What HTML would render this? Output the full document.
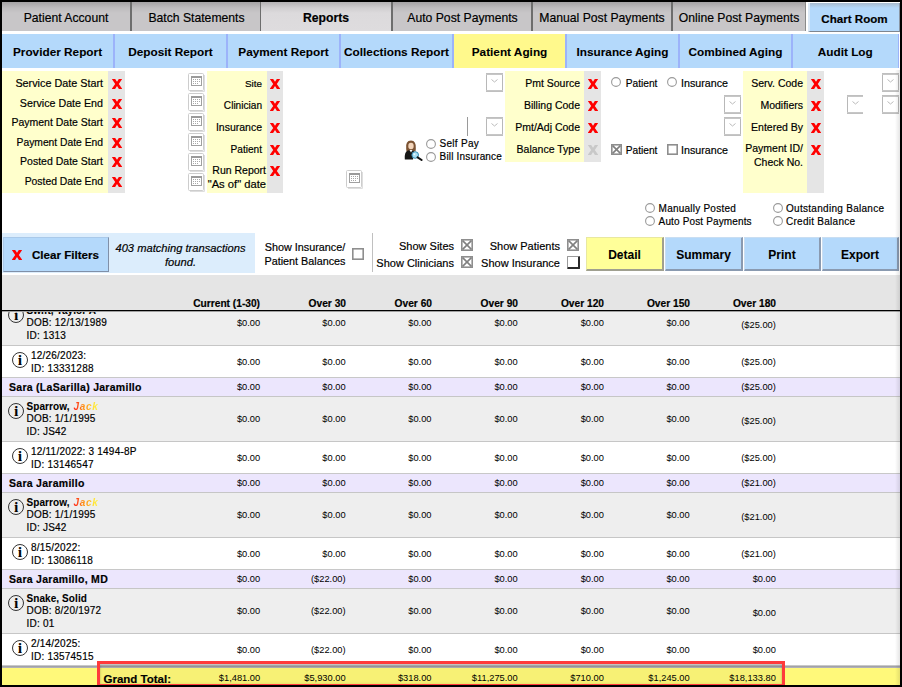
<!DOCTYPE html>
<html><head><meta charset="utf-8">
<style>
*{box-sizing:border-box;margin:0;padding:0}
html,body{width:902px;height:687px;overflow:hidden;background:#000}
body{position:relative;font-family:"Liberation Sans",sans-serif;color:#000;-webkit-text-stroke:0.18px #000}
.a{position:absolute}
#page{position:absolute;left:2px;top:2px;width:898px;height:683px;background:#fff;overflow:hidden}
/* top tabs */
.tt{position:absolute;top:0;height:29px;background:linear-gradient(#a4a2a4 0px,#bebcbe 6px,#c8c6c8 11px,#c8c6c8 100%);font-size:12.2px;line-height:33px;text-align:center;white-space:nowrap}
.tdiv{position:absolute;top:0;width:2px;height:29px;background:#6d6d6d}
/* sub tabs */
.st{position:absolute;-webkit-text-stroke:0.08px #000;top:32px;height:34px;background:#b4d9fb;font-size:11.8px;font-weight:bold;line-height:36px;text-align:center;white-space:nowrap}
.sdiv{position:absolute;top:32px;width:2px;height:34px;background:#9cb3fa}
.yl{position:absolute;background:#ffffcc}
.gx{position:absolute;background:#e5e5e5}
.lbl{position:absolute;font-size:10.5px;text-align:right;white-space:nowrap;line-height:13px}
.xx{position:absolute;width:10px;height:10px}
.x{position:absolute;font-size:14px;font-weight:bold;color:#f00;line-height:14px;width:17px;text-align:center}
.cal{position:absolute;width:16px;height:18px;border:1px solid #c8c8c8;border-radius:2px;background:#fff;box-shadow:1px 1px 0 #dcdcdc}
.cal:after{content:"";position:absolute;left:2px;top:2px;width:10px;height:10px;border:1px solid #9a9a9a;border-top:2px solid #8a8a8a;background:repeating-linear-gradient(90deg,#fff 0 1px,#bbb 1px 2px)}
.dd{position:absolute;width:17px;height:18px;border:1px solid #c8c8c8;background:#fff}
.dd:after{content:"";position:absolute;left:5px;top:3px;width:5px;height:5px;border-right:1px solid #b0b0b0;border-bottom:1px solid #b0b0b0;transform:rotate(45deg)}
.rad{position:absolute;width:11px;height:11px;border:1px solid #6a6a6a;border-radius:50%;background:#fff}
.chk{position:absolute;width:12px;height:12px;border:1px solid #777;background:#fff}
.chkx{position:absolute;width:12px;height:12px;border:1px solid #777;background:#fff}
.chkx:before,.chkx:after{content:"";position:absolute;left:-1px;top:4.5px;width:12px;height:1px;background:#666;transform:rotate(45deg)}
.chkx:after{transform:rotate(-45deg)}
.t11{position:absolute;font-size:11px;white-space:nowrap;line-height:13px}
.btn{position:absolute;-webkit-text-stroke:0.08px #000;top:235px;height:34px;background:#b4d9fb;border:1px solid #c9def2;border-right:2px solid #8a9ab0;border-bottom:2px solid #8a9ab0;font-size:12px;font-weight:bold;text-align:center;line-height:35px}
/* table */
.row{position:absolute;left:0;width:898px;border-bottom:1px solid #c8c8c8}
.rg{background:#eeeeee}
.rw{background:#ffffff}
.rl{background:#ece6fd;font-weight:bold;font-size:12px}
.num{position:absolute;-webkit-text-stroke:0;font-weight:normal;font-size:9.3px;text-align:right;width:60px;white-space:nowrap;line-height:12px}
.hdr{position:absolute;font-size:10.2px;font-weight:bold;text-align:right;width:80px;white-space:nowrap;line-height:12px}
.info{position:absolute;width:16px;height:16px;border:1px solid #333;border-radius:50%;font-family:"Liberation Serif",serif;font-weight:bold;font-size:14px;line-height:15px;text-align:center}
.pl{position:absolute;font-size:10px;letter-spacing:0.22px;line-height:13px;white-space:nowrap}
.pb{font-weight:bold;letter-spacing:0.08px;-webkit-text-stroke:0.08px #000}
.jack{-webkit-text-stroke:0;font-style:italic;letter-spacing:0.7px;padding-left:1px;background:linear-gradient(90deg,#ff1a1a 0%,#ff4a1a 22%,#ff8a12 40%,#ffa820 62%,#ffe030 80%,#fff24a 100%);-webkit-background-clip:text;background-clip:text;color:transparent}
</style></head><body>
<div id="page">
 <!-- top tabs -->
 <div class="tt" style="left:0;width:128px">Patient Account</div>
 <div class="tdiv" style="left:128px"></div>
 <div class="tt" style="left:130px;width:129px">Batch Statements</div>
 <div class="tt" style="left:259px;width:130px;background:linear-gradient(#b4b2b4 0,#d0ced0 6px,#dcdadc 11px,#dedcde 100%);font-weight:bold">Reports</div>
 <div class="tdiv" style="left:258px;width:1px"></div>
 <div class="tdiv" style="left:389px"></div>
 <div class="tt" style="left:391px;width:139px">Auto Post Payments</div>
 <div class="tdiv" style="left:529px"></div>
 <div class="tt" style="left:531px;width:138px">Manual Post Payments</div>
 <div class="tdiv" style="left:669px"></div>
 <div class="tt" style="left:671px;width:133px;border-right:1px solid #8a8a8a">Online Post Payments</div>
 <div class="tt" style="left:806px;top:1px;width:92px;height:29px;background:linear-gradient(#a9bccf 0,#b4d9fb 5px);border-left:2px solid #dbe9f7;border-right:1px solid #8a96a4;border-bottom:1px solid #7e8690;font-weight:bold;line-height:32px;font-size:11.6px;padding-left:0">Chart Room</div>

 <!-- sub tabs -->
 <div class="st" style="left:0;width:111px">Provider Report</div>
 <div class="sdiv" style="left:111px"></div>
 <div class="st" style="left:113px;width:111px">Deposit Report</div>
 <div class="sdiv" style="left:224px"></div>
 <div class="st" style="left:226px;width:111px">Payment Report</div>
 <div class="sdiv" style="left:337px"></div>
 <div class="st" style="left:339px;width:111px">Collections Report</div>
 <div class="sdiv" style="left:450px"></div>
 <div class="st" style="left:452px;width:111px;background:#fff98c">Patient Aging</div>
 <div class="sdiv" style="left:563px"></div>
 <div class="st" style="left:565px;width:111px">Insurance Aging</div>
 <div class="sdiv" style="left:676px"></div>
 <div class="st" style="left:678px;width:111px">Combined Aging</div>
 <div class="sdiv" style="left:789px"></div>
 <div class="st" style="left:791px;width:104.5px">Audit Log</div>
 <div class="sdiv" style="left:895.5px;width:1.5px"></div>
 <div class="a" style="left:897px;top:32px;width:1px;height:34px;background:#fff"></div>

 <!-- filter panel 1 -->
 <div class="yl" style="left:0;top:69px;width:106px;height:122px"></div>
 <div class="gx" style="left:106px;top:69px;width:17px;height:122px"></div>
 <div class="lbl" style="left:0;width:101px;top:75px;font-size:10.8px">Service Date Start</div>
 <div class="lbl" style="left:0;width:101px;top:95px;font-size:10.7px">Service Date End</div>
 <div class="lbl" style="left:0;width:101px;top:114px">Payment Date Start</div>
 <div class="lbl" style="left:0;width:101px;top:134px;font-size:10.3px">Payment Date End</div>
 <div class="lbl" style="left:0;width:101px;top:153px">Posted Date Start</div>
 <div class="lbl" style="left:0;width:101px;top:173px;font-size:10.36px">Posted Date End</div>
 <div class="xx" style="left:110px;top:77px;color:#f00"><svg width="10" height="10" viewBox="0 0 10 10" style="display:block"><path d="M-0.2 0 H3.2 L5 2.8 L6.8 0 H10.2 L6.8 4.9 L10.4 10 H6.9 L5 7 L3.1 10 H-0.4 L3.2 4.9 Z" fill="currentColor"/></svg></div>
 <div class="xx" style="left:110px;top:97px;color:#f00"><svg width="10" height="10" viewBox="0 0 10 10" style="display:block"><path d="M-0.2 0 H3.2 L5 2.8 L6.8 0 H10.2 L6.8 4.9 L10.4 10 H6.9 L5 7 L3.1 10 H-0.4 L3.2 4.9 Z" fill="currentColor"/></svg></div>
 <div class="xx" style="left:110px;top:116px;color:#f00"><svg width="10" height="10" viewBox="0 0 10 10" style="display:block"><path d="M-0.2 0 H3.2 L5 2.8 L6.8 0 H10.2 L6.8 4.9 L10.4 10 H6.9 L5 7 L3.1 10 H-0.4 L3.2 4.9 Z" fill="currentColor"/></svg></div>
 <div class="xx" style="left:110px;top:136px;color:#f00"><svg width="10" height="10" viewBox="0 0 10 10" style="display:block"><path d="M-0.2 0 H3.2 L5 2.8 L6.8 0 H10.2 L6.8 4.9 L10.4 10 H6.9 L5 7 L3.1 10 H-0.4 L3.2 4.9 Z" fill="currentColor"/></svg></div>
 <div class="xx" style="left:110px;top:155px;color:#f00"><svg width="10" height="10" viewBox="0 0 10 10" style="display:block"><path d="M-0.2 0 H3.2 L5 2.8 L6.8 0 H10.2 L6.8 4.9 L10.4 10 H6.9 L5 7 L3.1 10 H-0.4 L3.2 4.9 Z" fill="currentColor"/></svg></div>
 <div class="xx" style="left:110px;top:175px;color:#f00"><svg width="10" height="10" viewBox="0 0 10 10" style="display:block"><path d="M-0.2 0 H3.2 L5 2.8 L6.8 0 H10.2 L6.8 4.9 L10.4 10 H6.9 L5 7 L3.1 10 H-0.4 L3.2 4.9 Z" fill="currentColor"/></svg></div>

 <svg class="a" style="left:186px;top:71px" width="18" height="19" viewBox="0 0 18 19"><rect x="0.5" y="0.5" width="15" height="17" rx="1" fill="#fff" stroke="#cdcdcd"/><path d="M16.5 2 V18.5 H2" fill="none" stroke="#dedede" stroke-width="1"/><rect x="3.5" y="3.5" width="10" height="9" fill="#fff" stroke="#a0a0a0"/><rect x="3" y="3" width="11" height="2" fill="#9a9a9a"/><rect x="5" y="6" width="1" height="1" fill="#a8a8a8"/><rect x="7" y="6" width="1" height="1" fill="#a8a8a8"/><rect x="9" y="6" width="1" height="1" fill="#a8a8a8"/><rect x="11" y="6" width="1" height="1" fill="#a8a8a8"/><rect x="5" y="8" width="1" height="1" fill="#a8a8a8"/><rect x="7" y="8" width="1" height="1" fill="#a8a8a8"/><rect x="9" y="8" width="1" height="1" fill="#a8a8a8"/><rect x="11" y="8" width="1" height="1" fill="#a8a8a8"/><rect x="5" y="10" width="1" height="1" fill="#a8a8a8"/><rect x="7" y="10" width="1" height="1" fill="#a8a8a8"/><rect x="9" y="10" width="1" height="1" fill="#a8a8a8"/></svg>
 <svg class="a" style="left:186px;top:91px" width="18" height="19" viewBox="0 0 18 19"><rect x="0.5" y="0.5" width="15" height="17" rx="1" fill="#fff" stroke="#cdcdcd"/><path d="M16.5 2 V18.5 H2" fill="none" stroke="#dedede" stroke-width="1"/><rect x="3.5" y="3.5" width="10" height="9" fill="#fff" stroke="#a0a0a0"/><rect x="3" y="3" width="11" height="2" fill="#9a9a9a"/><rect x="5" y="6" width="1" height="1" fill="#a8a8a8"/><rect x="7" y="6" width="1" height="1" fill="#a8a8a8"/><rect x="9" y="6" width="1" height="1" fill="#a8a8a8"/><rect x="11" y="6" width="1" height="1" fill="#a8a8a8"/><rect x="5" y="8" width="1" height="1" fill="#a8a8a8"/><rect x="7" y="8" width="1" height="1" fill="#a8a8a8"/><rect x="9" y="8" width="1" height="1" fill="#a8a8a8"/><rect x="11" y="8" width="1" height="1" fill="#a8a8a8"/><rect x="5" y="10" width="1" height="1" fill="#a8a8a8"/><rect x="7" y="10" width="1" height="1" fill="#a8a8a8"/><rect x="9" y="10" width="1" height="1" fill="#a8a8a8"/></svg>
 <svg class="a" style="left:186px;top:111px" width="18" height="19" viewBox="0 0 18 19"><rect x="0.5" y="0.5" width="15" height="17" rx="1" fill="#fff" stroke="#cdcdcd"/><path d="M16.5 2 V18.5 H2" fill="none" stroke="#dedede" stroke-width="1"/><rect x="3.5" y="3.5" width="10" height="9" fill="#fff" stroke="#a0a0a0"/><rect x="3" y="3" width="11" height="2" fill="#9a9a9a"/><rect x="5" y="6" width="1" height="1" fill="#a8a8a8"/><rect x="7" y="6" width="1" height="1" fill="#a8a8a8"/><rect x="9" y="6" width="1" height="1" fill="#a8a8a8"/><rect x="11" y="6" width="1" height="1" fill="#a8a8a8"/><rect x="5" y="8" width="1" height="1" fill="#a8a8a8"/><rect x="7" y="8" width="1" height="1" fill="#a8a8a8"/><rect x="9" y="8" width="1" height="1" fill="#a8a8a8"/><rect x="11" y="8" width="1" height="1" fill="#a8a8a8"/><rect x="5" y="10" width="1" height="1" fill="#a8a8a8"/><rect x="7" y="10" width="1" height="1" fill="#a8a8a8"/><rect x="9" y="10" width="1" height="1" fill="#a8a8a8"/></svg>
 <svg class="a" style="left:186px;top:131px" width="18" height="19" viewBox="0 0 18 19"><rect x="0.5" y="0.5" width="15" height="17" rx="1" fill="#fff" stroke="#cdcdcd"/><path d="M16.5 2 V18.5 H2" fill="none" stroke="#dedede" stroke-width="1"/><rect x="3.5" y="3.5" width="10" height="9" fill="#fff" stroke="#a0a0a0"/><rect x="3" y="3" width="11" height="2" fill="#9a9a9a"/><rect x="5" y="6" width="1" height="1" fill="#a8a8a8"/><rect x="7" y="6" width="1" height="1" fill="#a8a8a8"/><rect x="9" y="6" width="1" height="1" fill="#a8a8a8"/><rect x="11" y="6" width="1" height="1" fill="#a8a8a8"/><rect x="5" y="8" width="1" height="1" fill="#a8a8a8"/><rect x="7" y="8" width="1" height="1" fill="#a8a8a8"/><rect x="9" y="8" width="1" height="1" fill="#a8a8a8"/><rect x="11" y="8" width="1" height="1" fill="#a8a8a8"/><rect x="5" y="10" width="1" height="1" fill="#a8a8a8"/><rect x="7" y="10" width="1" height="1" fill="#a8a8a8"/><rect x="9" y="10" width="1" height="1" fill="#a8a8a8"/></svg>
 <svg class="a" style="left:186px;top:151px" width="18" height="19" viewBox="0 0 18 19"><rect x="0.5" y="0.5" width="15" height="17" rx="1" fill="#fff" stroke="#cdcdcd"/><path d="M16.5 2 V18.5 H2" fill="none" stroke="#dedede" stroke-width="1"/><rect x="3.5" y="3.5" width="10" height="9" fill="#fff" stroke="#a0a0a0"/><rect x="3" y="3" width="11" height="2" fill="#9a9a9a"/><rect x="5" y="6" width="1" height="1" fill="#a8a8a8"/><rect x="7" y="6" width="1" height="1" fill="#a8a8a8"/><rect x="9" y="6" width="1" height="1" fill="#a8a8a8"/><rect x="11" y="6" width="1" height="1" fill="#a8a8a8"/><rect x="5" y="8" width="1" height="1" fill="#a8a8a8"/><rect x="7" y="8" width="1" height="1" fill="#a8a8a8"/><rect x="9" y="8" width="1" height="1" fill="#a8a8a8"/><rect x="11" y="8" width="1" height="1" fill="#a8a8a8"/><rect x="5" y="10" width="1" height="1" fill="#a8a8a8"/><rect x="7" y="10" width="1" height="1" fill="#a8a8a8"/><rect x="9" y="10" width="1" height="1" fill="#a8a8a8"/></svg>
 <svg class="a" style="left:186px;top:171px" width="18" height="19" viewBox="0 0 18 19"><rect x="0.5" y="0.5" width="15" height="17" rx="1" fill="#fff" stroke="#cdcdcd"/><path d="M16.5 2 V18.5 H2" fill="none" stroke="#dedede" stroke-width="1"/><rect x="3.5" y="3.5" width="10" height="9" fill="#fff" stroke="#a0a0a0"/><rect x="3" y="3" width="11" height="2" fill="#9a9a9a"/><rect x="5" y="6" width="1" height="1" fill="#a8a8a8"/><rect x="7" y="6" width="1" height="1" fill="#a8a8a8"/><rect x="9" y="6" width="1" height="1" fill="#a8a8a8"/><rect x="11" y="6" width="1" height="1" fill="#a8a8a8"/><rect x="5" y="8" width="1" height="1" fill="#a8a8a8"/><rect x="7" y="8" width="1" height="1" fill="#a8a8a8"/><rect x="9" y="8" width="1" height="1" fill="#a8a8a8"/><rect x="11" y="8" width="1" height="1" fill="#a8a8a8"/><rect x="5" y="10" width="1" height="1" fill="#a8a8a8"/><rect x="7" y="10" width="1" height="1" fill="#a8a8a8"/><rect x="9" y="10" width="1" height="1" fill="#a8a8a8"/></svg>

 <!-- panel 2 -->
 <div class="yl" style="left:205px;top:69px;width:60px;height:122px"></div>
 <div class="gx" style="left:265px;top:69px;width:16px;height:122px"></div>
 <div class="lbl" style="left:199px;width:61px;top:75px;font-size:9.9px">Site</div>
 <div class="lbl" style="left:199px;width:61px;top:97px;font-size:10.1px">Clinician</div>
 <div class="lbl" style="left:199px;width:61px;top:119px">Insurance</div>
 <div class="lbl" style="left:199px;width:61px;top:141px;font-size:10.1px">Patient</div>
 <div class="lbl" style="left:200px;width:64px;top:162px">Run Report</div>
 <div class="lbl" style="left:200px;width:64px;top:175.5px;font-size:11.2px">"As of" date</div>
 <div class="xx" style="left:268px;top:77px;color:#f00"><svg width="10" height="10" viewBox="0 0 10 10" style="display:block"><path d="M-0.2 0 H3.2 L5 2.8 L6.8 0 H10.2 L6.8 4.9 L10.4 10 H6.9 L5 7 L3.1 10 H-0.4 L3.2 4.9 Z" fill="currentColor"/></svg></div>
 <div class="xx" style="left:268px;top:99px;color:#f00"><svg width="10" height="10" viewBox="0 0 10 10" style="display:block"><path d="M-0.2 0 H3.2 L5 2.8 L6.8 0 H10.2 L6.8 4.9 L10.4 10 H6.9 L5 7 L3.1 10 H-0.4 L3.2 4.9 Z" fill="currentColor"/></svg></div>
 <div class="xx" style="left:268px;top:121px;color:#f00"><svg width="10" height="10" viewBox="0 0 10 10" style="display:block"><path d="M-0.2 0 H3.2 L5 2.8 L6.8 0 H10.2 L6.8 4.9 L10.4 10 H6.9 L5 7 L3.1 10 H-0.4 L3.2 4.9 Z" fill="currentColor"/></svg></div>
 <div class="xx" style="left:268px;top:143px;color:#f00"><svg width="10" height="10" viewBox="0 0 10 10" style="display:block"><path d="M-0.2 0 H3.2 L5 2.8 L6.8 0 H10.2 L6.8 4.9 L10.4 10 H6.9 L5 7 L3.1 10 H-0.4 L3.2 4.9 Z" fill="currentColor"/></svg></div>
 <div class="xx" style="left:268px;top:164px;color:#f00"><svg width="10" height="10" viewBox="0 0 10 10" style="display:block"><path d="M-0.2 0 H3.2 L5 2.8 L6.8 0 H10.2 L6.8 4.9 L10.4 10 H6.9 L5 7 L3.1 10 H-0.4 L3.2 4.9 Z" fill="currentColor"/></svg></div>

 <svg class="a" style="left:344px;top:168px" width="18" height="19" viewBox="0 0 18 19"><rect x="0.5" y="0.5" width="15" height="17" rx="1" fill="#fff" stroke="#cdcdcd"/><path d="M16.5 2 V18.5 H2" fill="none" stroke="#dedede" stroke-width="1"/><rect x="3.5" y="3.5" width="10" height="9" fill="#fff" stroke="#a0a0a0"/><rect x="3" y="3" width="11" height="2" fill="#9a9a9a"/><rect x="5" y="6" width="1" height="1" fill="#a8a8a8"/><rect x="7" y="6" width="1" height="1" fill="#a8a8a8"/><rect x="9" y="6" width="1" height="1" fill="#a8a8a8"/><rect x="11" y="6" width="1" height="1" fill="#a8a8a8"/><rect x="5" y="8" width="1" height="1" fill="#a8a8a8"/><rect x="7" y="8" width="1" height="1" fill="#a8a8a8"/><rect x="9" y="8" width="1" height="1" fill="#a8a8a8"/><rect x="11" y="8" width="1" height="1" fill="#a8a8a8"/><rect x="5" y="10" width="1" height="1" fill="#a8a8a8"/><rect x="7" y="10" width="1" height="1" fill="#a8a8a8"/><rect x="9" y="10" width="1" height="1" fill="#a8a8a8"/></svg>

 <!-- middle -->
 <svg class="a" style="left:484px;top:71px" width="18" height="19" viewBox="0 0 18 19"><rect x="0.5" y="0.5" width="16" height="18" fill="#fff" stroke="#b8b8b8"/><path d="M0 1.2 H17 M0 17.8 H17" stroke="#c6c6c6" stroke-width="1.4"/><path d="M5.5 6.5 L8.5 9 L11.5 6.5" fill="none" stroke="#bcbcbc" stroke-width="1"/></svg>
 <div class="a" style="left:465px;top:115px;width:1px;height:19px;background:#9a9a9a"></div>
 <svg class="a" style="left:484px;top:115px" width="18" height="19" viewBox="0 0 18 19"><rect x="0.5" y="0.5" width="16" height="18" fill="#fff" stroke="#b8b8b8"/><path d="M0 1.2 H17 M0 17.8 H17" stroke="#c6c6c6" stroke-width="1.4"/><path d="M5.5 6.5 L8.5 9 L11.5 6.5" fill="none" stroke="#bcbcbc" stroke-width="1"/></svg>
 <svg class="a" style="left:400.5px;top:136.5px" width="20" height="22" viewBox="0 0 20 22">
  <path d="M3.2 10 Q2.2 1.5 8 1.5 Q13.5 1.5 12.8 10 L12.5 12.5 L3.5 12.5 Z" fill="#7b5232"/>
  <ellipse cx="8" cy="7" rx="2.7" ry="3.3" fill="#f3d5bb"/>
  <path d="M1.8 20.5 Q1.2 12.5 5 11.5 L8 11 L11 12 L10 20.5 Z" fill="#161616"/>
  <path d="M6.5 11 L8 13.5 L9.5 11 Z" fill="#fff"/>
  <circle cx="12.2" cy="16" r="3.3" fill="#a8def3" stroke="#3a8db5" stroke-width="1"/>
  <circle cx="11.4" cy="15.2" r="1" fill="#e8f8ff"/>
  <path d="M14.6 18.3 L18.6 21" stroke="#111" stroke-width="2" stroke-linecap="round"/>
 </svg>
 <svg class="a" style="left:424px;top:136.5px" width="10" height="10" viewBox="0 0 10 10"><circle cx="5.0" cy="5.0" r="4.4" fill="#fff" stroke="#9a9a9a" stroke-width="1.1"/></svg>
 <div class="t11" style="left:437.6px;top:135px;font-size:10px;letter-spacing:0.27px">Self Pay</div>
 <svg class="a" style="left:424px;top:149.5px" width="10" height="10" viewBox="0 0 10 10"><circle cx="5.0" cy="5.0" r="4.4" fill="#fff" stroke="#9a9a9a" stroke-width="1.1"/></svg>
 <div class="t11" style="left:437.6px;top:148px;font-size:10px;letter-spacing:0.17px">Bill Insurance</div>

 <!-- panel 3 -->
 <div class="yl" style="left:503px;top:69px;width:79px;height:91px"></div>
 <div class="gx" style="left:582px;top:69px;width:17px;height:91px"></div>
 <div class="lbl" style="left:480px;width:98px;top:75px">Pmt Source</div>
 <div class="lbl" style="left:480px;width:98px;top:97px">Billing Code</div>
 <div class="lbl" style="left:480px;width:98px;top:119px">Pmt/Adj Code</div>
 <div class="lbl" style="left:480px;width:98px;top:141px">Balance Type</div>
 <div class="xx" style="left:586px;top:77px;color:#f00"><svg width="10" height="10" viewBox="0 0 10 10" style="display:block"><path d="M-0.2 0 H3.2 L5 2.8 L6.8 0 H10.2 L6.8 4.9 L10.4 10 H6.9 L5 7 L3.1 10 H-0.4 L3.2 4.9 Z" fill="currentColor"/></svg></div>
 <div class="xx" style="left:586px;top:99px;color:#f00"><svg width="10" height="10" viewBox="0 0 10 10" style="display:block"><path d="M-0.2 0 H3.2 L5 2.8 L6.8 0 H10.2 L6.8 4.9 L10.4 10 H6.9 L5 7 L3.1 10 H-0.4 L3.2 4.9 Z" fill="currentColor"/></svg></div>
 <div class="xx" style="left:586px;top:121px;color:#f00"><svg width="10" height="10" viewBox="0 0 10 10" style="display:block"><path d="M-0.2 0 H3.2 L5 2.8 L6.8 0 H10.2 L6.8 4.9 L10.4 10 H6.9 L5 7 L3.1 10 H-0.4 L3.2 4.9 Z" fill="currentColor"/></svg></div>
 <div class="xx" style="left:586px;top:143px;color:#c8c8c8"><svg width="10" height="10" viewBox="0 0 10 10" style="display:block"><path d="M-0.2 0 H3.2 L5 2.8 L6.8 0 H10.2 L6.8 4.9 L10.4 10 H6.9 L5 7 L3.1 10 H-0.4 L3.2 4.9 Z" fill="currentColor"/></svg></div>

 <svg class="a" style="left:609px;top:75px" width="10" height="10" viewBox="0 0 10 10"><circle cx="5.0" cy="5.0" r="4.4" fill="#fff" stroke="#9a9a9a" stroke-width="1.1"/></svg>
 <div class="t11" style="left:623.7px;top:74.5px;font-size:10.2px">Patient</div>
 <svg class="a" style="left:665px;top:75px" width="10" height="10" viewBox="0 0 10 10"><circle cx="5.0" cy="5.0" r="4.4" fill="#fff" stroke="#9a9a9a" stroke-width="1.1"/></svg>
 <div class="t11" style="left:679px;top:74.5px;font-size:10.7px">Insurance</div>
 <svg class="a" style="left:722px;top:93px" width="18" height="19" viewBox="0 0 18 19"><rect x="0.5" y="0.5" width="16" height="18" fill="#fff" stroke="#b8b8b8"/><path d="M0 1.2 H17 M0 17.8 H17" stroke="#c6c6c6" stroke-width="1.4"/><path d="M5.5 6.5 L8.5 9 L11.5 6.5" fill="none" stroke="#bcbcbc" stroke-width="1"/></svg>
 <svg class="a" style="left:722px;top:115px" width="18" height="19" viewBox="0 0 18 19"><rect x="0.5" y="0.5" width="16" height="18" fill="#fff" stroke="#b8b8b8"/><path d="M0 1.2 H17 M0 17.8 H17" stroke="#c6c6c6" stroke-width="1.4"/><path d="M5.5 6.5 L8.5 9 L11.5 6.5" fill="none" stroke="#bcbcbc" stroke-width="1"/></svg>
 <svg class="a" style="left:609px;top:142px" width="11" height="11" viewBox="0 0 11 11"><rect x="0.8" y="0.8" width="9.4" height="9.4" fill="#fff" stroke="#8e8e8e" stroke-width="1.6"/><path d="M1.6 1.6 L9.4 9.4 M9.4 1.6 L1.6 9.4" stroke="#808080" stroke-width="1.6"/></svg>
 <div class="t11" style="left:623.7px;top:141.8px;font-size:10.2px">Patient</div>
 <svg class="a" style="left:665px;top:142px" width="11" height="11" viewBox="0 0 11 11"><rect x="0.8" y="0.8" width="9.4" height="9.4" fill="#fff" stroke="#8e8e8e" stroke-width="1.6"/></svg>
 <div class="t11" style="left:679px;top:141.8px;font-size:10.7px">Insurance</div>

 <!-- panel 4 -->
 <div class="yl" style="left:741px;top:69px;width:64px;height:122px"></div>
 <div class="gx" style="left:805px;top:69px;width:17px;height:122px"></div>
 <div class="lbl" style="left:700px;width:101px;top:75px">Serv. Code</div>
 <div class="lbl" style="left:700px;width:101px;top:97px">Modifiers</div>
 <div class="lbl" style="left:700px;width:101px;top:119px">Entered By</div>
 <div class="lbl" style="left:700px;width:101px;top:140px">Payment ID/</div>
 <div class="lbl" style="left:700px;width:101px;top:154px">Check No.</div>
 <div class="xx" style="left:809px;top:77px;color:#f00"><svg width="10" height="10" viewBox="0 0 10 10" style="display:block"><path d="M-0.2 0 H3.2 L5 2.8 L6.8 0 H10.2 L6.8 4.9 L10.4 10 H6.9 L5 7 L3.1 10 H-0.4 L3.2 4.9 Z" fill="currentColor"/></svg></div>
 <div class="xx" style="left:809px;top:99px;color:#f00"><svg width="10" height="10" viewBox="0 0 10 10" style="display:block"><path d="M-0.2 0 H3.2 L5 2.8 L6.8 0 H10.2 L6.8 4.9 L10.4 10 H6.9 L5 7 L3.1 10 H-0.4 L3.2 4.9 Z" fill="currentColor"/></svg></div>
 <div class="xx" style="left:809px;top:121px;color:#f00"><svg width="10" height="10" viewBox="0 0 10 10" style="display:block"><path d="M-0.2 0 H3.2 L5 2.8 L6.8 0 H10.2 L6.8 4.9 L10.4 10 H6.9 L5 7 L3.1 10 H-0.4 L3.2 4.9 Z" fill="currentColor"/></svg></div>
 <div class="xx" style="left:809px;top:143px;color:#f00"><svg width="10" height="10" viewBox="0 0 10 10" style="display:block"><path d="M-0.2 0 H3.2 L5 2.8 L6.8 0 H10.2 L6.8 4.9 L10.4 10 H6.9 L5 7 L3.1 10 H-0.4 L3.2 4.9 Z" fill="currentColor"/></svg></div>
 <svg class="a" style="left:845px;top:93px" width="18" height="19" viewBox="0 0 18 19"><rect x="0.5" y="0.5" width="16" height="18" fill="#fff" stroke="#b8b8b8"/><path d="M0 1.2 H17 M0 17.8 H17" stroke="#c6c6c6" stroke-width="1.4"/><path d="M5.5 6.5 L8.5 9 L11.5 6.5" fill="none" stroke="#bcbcbc" stroke-width="1"/><rect x="16" y="0" width="2" height="19" fill="#fff"/></svg>
 <svg class="a" style="left:880px;top:71px" width="18" height="19" viewBox="0 0 18 19"><rect x="0.5" y="0.5" width="16" height="18" fill="#fff" stroke="#b8b8b8"/><path d="M0 1.2 H17 M0 17.8 H17" stroke="#c6c6c6" stroke-width="1.4"/><path d="M5.5 6.5 L8.5 9 L11.5 6.5" fill="none" stroke="#bcbcbc" stroke-width="1"/></svg>
 <svg class="a" style="left:880px;top:93px" width="18" height="19" viewBox="0 0 18 19"><rect x="0.5" y="0.5" width="16" height="18" fill="#fff" stroke="#b8b8b8"/><path d="M0 1.2 H17 M0 17.8 H17" stroke="#c6c6c6" stroke-width="1.4"/><path d="M5.5 6.5 L8.5 9 L11.5 6.5" fill="none" stroke="#bcbcbc" stroke-width="1"/></svg>

 <svg class="a" style="left:643px;top:201px" width="10" height="10" viewBox="0 0 10 10"><circle cx="5.0" cy="5.0" r="4.4" fill="#fff" stroke="#9a9a9a" stroke-width="1.1"/></svg>
 <div class="t11" style="left:656.6px;top:200px;font-size:10px;letter-spacing:0.23px">Manually Posted</div>
 <svg class="a" style="left:643px;top:214.4px" width="10" height="10" viewBox="0 0 10 10"><circle cx="5.0" cy="5.0" r="4.4" fill="#fff" stroke="#9a9a9a" stroke-width="1.1"/></svg>
 <div class="t11" style="left:656.6px;top:213.3px;font-size:10px;letter-spacing:0.14px">Auto Post Payments</div>
 <svg class="a" style="left:770.6px;top:201px" width="10" height="10" viewBox="0 0 10 10"><circle cx="5.0" cy="5.0" r="4.4" fill="#fff" stroke="#9a9a9a" stroke-width="1.1"/></svg>
 <div class="t11" style="left:784px;top:200px;font-size:10px;letter-spacing:0.29px">Outstanding Balance</div>
 <svg class="a" style="left:770.6px;top:214.4px" width="10" height="10" viewBox="0 0 10 10"><circle cx="5.0" cy="5.0" r="4.4" fill="#fff" stroke="#9a9a9a" stroke-width="1.1"/></svg>
 <div class="t11" style="left:784px;top:213.3px;font-size:10px;letter-spacing:0.27px">Credit Balance</div>

 <!-- action bar -->
 <div class="a" style="left:0;top:231px;width:253px;height:39.6px;background:#dcedfc"></div>
 <div class="a" style="left:1px;top:235px;width:106px;height:35px;background:#b4d9fb;border-top:1px solid #a9c9ea;border-left:1px solid #a9c9ea;border-right:1px solid #8090a8;border-bottom:1px solid #8090a8"></div>
 <div class="xx" style="left:10px;top:248px;color:#f00"><svg width="10" height="10" viewBox="0 0 10 10" style="display:block"><path d="M-0.2 0 H3.2 L5 2.8 L6.8 0 H10.2 L6.8 4.9 L10.4 10 H6.9 L5 7 L3.1 10 H-0.4 L3.2 4.9 Z" fill="currentColor"/></svg></div>
 <div class="a" style="left:30px;top:246px;font-size:11.6px;font-weight:bold;line-height:14px">Clear Filters</div>
 <div class="a" style="left:104.5px;top:239px;width:148px;text-align:center;font-size:11.15px;font-style:italic;line-height:14px">403 matching transactions<br>found.</div>

 <div class="t11" style="left:259px;top:237.5px;width:88px;text-align:center;line-height:14.8px;font-size:10.8px">Show Insurance/<br>Patient Balances</div>
 <svg class="a" style="left:350px;top:246.4px" width="12" height="12" viewBox="0 0 12 12"><rect x="0.8" y="0.8" width="10.4" height="10.4" fill="#fff" stroke="#8e8e8e" stroke-width="1.6"/></svg>
 <div class="a" style="left:370px;top:231px;width:1px;height:39px;background:#c0c0c0"></div>
 <div class="t11" style="left:360px;top:238px;width:92px;text-align:right">Show Sites</div>
 <svg class="a" style="left:458.8px;top:236.9px" width="12" height="12" viewBox="0 0 12 12"><rect x="0.8" y="0.8" width="10.4" height="10.4" fill="#fff" stroke="#8e8e8e" stroke-width="1.6"/><path d="M1.6 1.6 L10.4 10.4 M10.4 1.6 L1.6 10.4" stroke="#808080" stroke-width="1.6"/></svg>
 <div class="t11" style="left:360px;top:255px;width:92px;text-align:right">Show Clinicians</div>
 <svg class="a" style="left:458.8px;top:254.3px" width="12" height="12" viewBox="0 0 12 12"><rect x="0.8" y="0.8" width="10.4" height="10.4" fill="#fff" stroke="#8e8e8e" stroke-width="1.6"/><path d="M1.6 1.6 L10.4 10.4 M10.4 1.6 L1.6 10.4" stroke="#808080" stroke-width="1.6"/></svg>
 <div class="t11" style="left:460px;top:238px;width:98px;text-align:right">Show Patients</div>
 <svg class="a" style="left:565.3px;top:236.9px" width="12" height="12" viewBox="0 0 12 12"><rect x="0.8" y="0.8" width="10.4" height="10.4" fill="#fff" stroke="#8e8e8e" stroke-width="1.6"/><path d="M1.6 1.6 L10.4 10.4 M10.4 1.6 L1.6 10.4" stroke="#808080" stroke-width="1.6"/></svg>
 <div class="t11" style="left:460px;top:255px;width:98px;text-align:right">Show Insurance</div>
 <div class="a" style="left:565px;top:254.3px;width:13px;height:12.5px;border:1px solid #9a9a9a;border-right:2px solid #2a2a2a;border-bottom:2px solid #2a2a2a;border-radius:1px;background:#fff"></div>

 <div class="btn" style="left:584px;width:78px;background:#ffff99;border-color:#e8e8a0;border-right-color:#a0a090;border-bottom-color:#a0a090">Detail</div>
 <div class="btn" style="left:663px;width:78px">Summary</div>
 <div class="btn" style="left:742px;width:77px">Print</div>
 <div class="btn" style="left:820px;width:77px">Export</div>

 <!-- table header -->
 <div class="a" style="left:0;top:273px;width:898px;height:35px;background:#e5e5e5"></div>
 <div class="a" style="left:0;top:308px;width:898px;height:2px;background:linear-gradient(#000 50%,#a0a0a0 50%)"></div>
 <div id="tbl" class="a" style="left:0;top:310px;width:898px;height:354px;overflow:hidden">
<div class="row rg" style="top:-11px;height:45px;border-bottom:1px solid #c6c6c6">
 <div class="info" style="left:6.199999999999999px;top:5.7px">i</div>
 <div class="pl pb" style="left:24.5px;top:3.4px">Swift, Taylor A</div>
 <div class="pl" style="left:24.5px;top:15.1px">DOB: 12/13/1989</div>
 <div class="pl" style="left:24.5px;top:27.9px">ID: 1313</div>
 <div class="num" style="left:198.2px;top:15.9px">$0.00</div>
 <div class="num" style="left:283.6px;top:15.9px">$0.00</div>
 <div class="num" style="left:369.5px;top:15.9px">$0.00</div>
 <div class="num" style="left:455.7px;top:15.9px">$0.00</div>
 <div class="num" style="left:541.9px;top:15.9px">$0.00</div>
 <div class="num" style="left:627.7px;top:15.9px">$0.00</div>
 <div class="num" style="left:713.9px;top:17.9px">($25.00)</div>
</div>
<div class="row rw" style="top:34px;height:32px">
 <div class="info" style="left:10px;top:6.3px">i</div>
 <div class="pl" style="left:29px;top:3.1px">12/26/2023:</div>
 <div class="pl" style="left:29px;top:15.7px">ID: 13331288</div>
 <div class="num" style="left:198.2px;top:9.9px">$0.00</div>
 <div class="num" style="left:283.6px;top:9.9px">$0.00</div>
 <div class="num" style="left:369.5px;top:9.9px">$0.00</div>
 <div class="num" style="left:455.7px;top:9.9px">$0.00</div>
 <div class="num" style="left:541.9px;top:9.9px">$0.00</div>
 <div class="num" style="left:627.7px;top:9.9px">$0.00</div>
 <div class="num" style="left:713.9px;top:9.9px">($25.00)</div>
</div>
<div class="row rl" style="top:66px;height:19px;border-bottom:1px solid #c6c6c6">
 <div class="pl" style="left:7px;top:3.4px;font-size:10.5px;letter-spacing:0.28px;font-weight:bold">Sara (LaSarilla) Jaramillo</div>
 <div class="num" style="left:198.2px;top:2.7px">$0.00</div>
 <div class="num" style="left:283.6px;top:2.7px">$0.00</div>
 <div class="num" style="left:369.5px;top:2.7px">$0.00</div>
 <div class="num" style="left:455.7px;top:2.7px">$0.00</div>
 <div class="num" style="left:541.9px;top:2.7px">$0.00</div>
 <div class="num" style="left:627.7px;top:2.7px">$0.00</div>
 <div class="num" style="left:713.9px;top:2.7px">($25.00)</div>
</div>
<div class="row rg" style="top:85px;height:45px;border-bottom:1px solid #c6c6c6">
 <div class="info" style="left:6.199999999999999px;top:5.7px">i</div>
 <div class="pl pb" style="left:24.5px;top:3.4px">Sparrow, <span class="jack">Jack</span></div>
 <div class="pl" style="left:24.5px;top:15.1px">DOB: 1/1/1995</div>
 <div class="pl" style="left:24.5px;top:27.9px">ID: JS42</div>
 <div class="num" style="left:198.2px;top:15.9px">$0.00</div>
 <div class="num" style="left:283.6px;top:15.9px">$0.00</div>
 <div class="num" style="left:369.5px;top:15.9px">$0.00</div>
 <div class="num" style="left:455.7px;top:15.9px">$0.00</div>
 <div class="num" style="left:541.9px;top:15.9px">$0.00</div>
 <div class="num" style="left:627.7px;top:15.9px">$0.00</div>
 <div class="num" style="left:713.9px;top:17.9px">($25.00)</div>
</div>
<div class="row rw" style="top:130px;height:32px">
 <div class="info" style="left:10px;top:6.3px">i</div>
 <div class="pl" style="left:29px;top:3.1px">12/11/2022: 3 1494-8P</div>
 <div class="pl" style="left:29px;top:15.7px">ID: 13146547</div>
 <div class="num" style="left:198.2px;top:9.9px">$0.00</div>
 <div class="num" style="left:283.6px;top:9.9px">$0.00</div>
 <div class="num" style="left:369.5px;top:9.9px">$0.00</div>
 <div class="num" style="left:455.7px;top:9.9px">$0.00</div>
 <div class="num" style="left:541.9px;top:9.9px">$0.00</div>
 <div class="num" style="left:627.7px;top:9.9px">$0.00</div>
 <div class="num" style="left:713.9px;top:9.9px">($25.00)</div>
</div>
<div class="row rl" style="top:162px;height:19px;border-bottom:1px solid #c6c6c6">
 <div class="pl" style="left:7px;top:3.4px;font-size:10.5px;letter-spacing:0.28px;font-weight:bold">Sara Jaramillo</div>
 <div class="num" style="left:198.2px;top:2.7px">$0.00</div>
 <div class="num" style="left:283.6px;top:2.7px">$0.00</div>
 <div class="num" style="left:369.5px;top:2.7px">$0.00</div>
 <div class="num" style="left:455.7px;top:2.7px">$0.00</div>
 <div class="num" style="left:541.9px;top:2.7px">$0.00</div>
 <div class="num" style="left:627.7px;top:2.7px">$0.00</div>
 <div class="num" style="left:713.9px;top:2.7px">($21.00)</div>
</div>
<div class="row rg" style="top:181px;height:45px;border-bottom:1px solid #c6c6c6">
 <div class="info" style="left:6.199999999999999px;top:5.7px">i</div>
 <div class="pl pb" style="left:24.5px;top:3.4px">Sparrow, <span class="jack">Jack</span></div>
 <div class="pl" style="left:24.5px;top:15.1px">DOB: 1/1/1995</div>
 <div class="pl" style="left:24.5px;top:27.9px">ID: JS42</div>
 <div class="num" style="left:198.2px;top:15.9px">$0.00</div>
 <div class="num" style="left:283.6px;top:15.9px">$0.00</div>
 <div class="num" style="left:369.5px;top:15.9px">$0.00</div>
 <div class="num" style="left:455.7px;top:15.9px">$0.00</div>
 <div class="num" style="left:541.9px;top:15.9px">$0.00</div>
 <div class="num" style="left:627.7px;top:15.9px">$0.00</div>
 <div class="num" style="left:713.9px;top:17.9px">($21.00)</div>
</div>
<div class="row rw" style="top:226px;height:32px">
 <div class="info" style="left:10px;top:6.3px">i</div>
 <div class="pl" style="left:29px;top:3.1px">8/15/2022:</div>
 <div class="pl" style="left:29px;top:15.7px">ID: 13086118</div>
 <div class="num" style="left:198.2px;top:9.9px">$0.00</div>
 <div class="num" style="left:283.6px;top:9.9px">$0.00</div>
 <div class="num" style="left:369.5px;top:9.9px">$0.00</div>
 <div class="num" style="left:455.7px;top:9.9px">$0.00</div>
 <div class="num" style="left:541.9px;top:9.9px">$0.00</div>
 <div class="num" style="left:627.7px;top:9.9px">$0.00</div>
 <div class="num" style="left:713.9px;top:9.9px">($21.00)</div>
</div>
<div class="row rl" style="top:258px;height:19px;border-bottom:1px solid #c6c6c6">
 <div class="pl" style="left:7px;top:3.4px;font-size:10.5px;letter-spacing:0.28px;font-weight:bold">Sara Jaramillo, MD</div>
 <div class="num" style="left:198.2px;top:2.7px">$0.00</div>
 <div class="num" style="left:283.6px;top:2.7px">($22.00)</div>
 <div class="num" style="left:369.5px;top:2.7px">$0.00</div>
 <div class="num" style="left:455.7px;top:2.7px">$0.00</div>
 <div class="num" style="left:541.9px;top:2.7px">$0.00</div>
 <div class="num" style="left:627.7px;top:2.7px">$0.00</div>
 <div class="num" style="left:713.9px;top:2.7px">$0.00</div>
</div>
<div class="row rg" style="top:277px;height:45px;border-bottom:1px solid #c6c6c6">
 <div class="info" style="left:6.199999999999999px;top:5.7px">i</div>
 <div class="pl pb" style="left:24.5px;top:3.4px">Snake, Solid</div>
 <div class="pl" style="left:24.5px;top:15.1px">DOB: 8/20/1972</div>
 <div class="pl" style="left:24.5px;top:27.9px">ID: 01</div>
 <div class="num" style="left:198.2px;top:15.9px">$0.00</div>
 <div class="num" style="left:283.6px;top:15.9px">($22.00)</div>
 <div class="num" style="left:369.5px;top:15.9px">$0.00</div>
 <div class="num" style="left:455.7px;top:15.9px">$0.00</div>
 <div class="num" style="left:541.9px;top:15.9px">$0.00</div>
 <div class="num" style="left:627.7px;top:15.9px">$0.00</div>
 <div class="num" style="left:713.9px;top:17.9px">$0.00</div>
</div>
<div class="row rw" style="top:322px;height:32px">
 <div class="info" style="left:10px;top:6.3px">i</div>
 <div class="pl" style="left:29px;top:3.1px">2/14/2025:</div>
 <div class="pl" style="left:29px;top:15.7px">ID: 13574515</div>
 <div class="num" style="left:198.2px;top:9.9px">$0.00</div>
 <div class="num" style="left:283.6px;top:9.9px">($22.00)</div>
 <div class="num" style="left:369.5px;top:9.9px">$0.00</div>
 <div class="num" style="left:455.7px;top:9.9px">$0.00</div>
 <div class="num" style="left:541.9px;top:9.9px">$0.00</div>
 <div class="num" style="left:627.7px;top:9.9px">$0.00</div>
 <div class="num" style="left:713.9px;top:9.9px">$0.00</div>
</div>
</div>
<div class="a" style="left:0;top:664px;width:898px;height:2px;background:linear-gradient(#9a9aa0,#b8b8c0)"></div>
<div class="a" style="left:0;top:666px;width:898px;height:17px;background:#fff97a"></div>
<div class="a" style="left:101.5px;top:671px;font-size:11.5px;font-weight:bold;line-height:13px">Grand Total:</div>
<div class="num" style="left:198.2px;top:669.9px">$1,481.00</div>
<div class="num" style="left:283.6px;top:669.9px">$5,930.00</div>
<div class="num" style="left:369.5px;top:669.9px">$318.00</div>
<div class="num" style="left:455.7px;top:669.9px">$11,275.00</div>
<div class="num" style="left:541.9px;top:669.9px">$710.00</div>
<div class="num" style="left:627.7px;top:669.9px">$1,245.00</div>
<div class="num" style="left:713.9px;top:669.9px">$18,133.80</div>
<div class="a" style="left:95px;top:659px;width:688px;height:26px;border:3px solid #ff3b3b;background:rgba(60,60,0,0.04);box-shadow:inset 0 2px 2px rgba(0,0,0,0.18), inset 0 0 3px rgba(0,0,0,0.12)"></div>
 <div class="hdr" style="left:178px;top:296px">Current (1-30)</div>
 <div class="hdr" style="left:264px;top:296px">Over 30</div>
 <div class="hdr" style="left:350px;top:296px">Over 60</div>
 <div class="hdr" style="left:436px;top:296px">Over 90</div>
 <div class="hdr" style="left:522px;top:296px">Over 120</div>
 <div class="hdr" style="left:608px;top:296px">Over 150</div>
 <div class="hdr" style="left:694px;top:296px">Over 180</div>
 <div class="a" style="left:893px;top:68px;width:5px;height:615px;background:linear-gradient(90deg,rgba(0,0,0,0),rgba(0,0,0,0.1))"></div>
</div>
</body></html>
